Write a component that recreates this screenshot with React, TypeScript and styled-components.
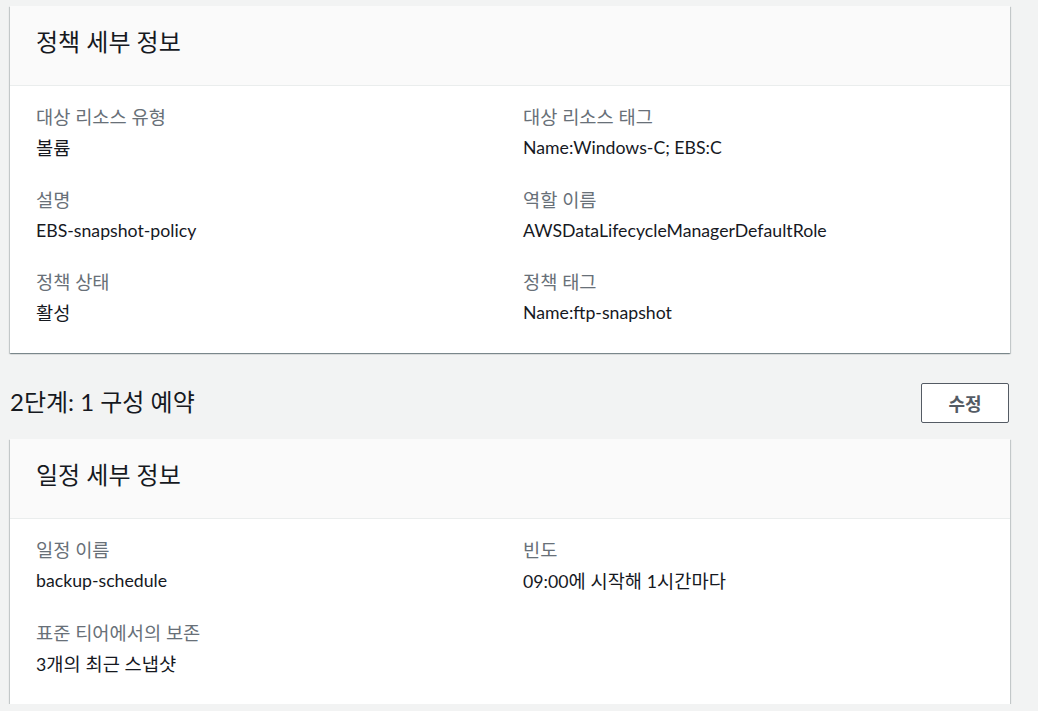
import React from "react";
import styled, { createGlobalStyle } from "styled-components";

const GlobalStyle = createGlobalStyle`
  html, body {
    margin: 0;
    padding: 0;
    background: #f2f3f3;
  }
  body {
    font-family: "Lato", "Noto Sans CJK KR", sans-serif;
    color: #16191f;
  }
`;

const Page = styled.div`
  padding: 6px 28px 0 10px;
  width: 1000px;
`;

const Card = styled.section`
  background: #ffffff;
  box-shadow: 0 1px 1px 0 rgba(0, 28, 36, 0.3), 1px 1px 1px 0 rgba(0, 28, 36, 0.15),
    -1px 1px 1px 0 rgba(0, 28, 36, 0.15);
`;

const CardHeader = styled.div`
  height: 80px;
  padding: 0 26px 8px;
  box-sizing: border-box;
  display: flex;
  align-items: center;
  background: #fafafa;
  border-bottom: 1px solid #eaeded;
`;

const CardTitle = styled.h2`
  margin: 0;
  font-size: 24px;
  font-weight: 400;
  line-height: 30px;
  color: #16191f;
`;

const CardBody = styled.dl`
  margin: 0;
  padding: 18px 26px 26px;
  display: grid;
  grid-template-columns: 1fr 1fr;
  column-gap: 26px;
  row-gap: 25px;
`;

const Field = styled.div`
  display: flex;
  flex-direction: column;
  gap: 5px;
`;

const Label = styled.dt`
  font-size: 18.7px;
  line-height: 26px;
  color: #687078;
`;

const Value = styled.dd`
  margin: 0;
  font-size: 17.7px;
  line-height: 26px;
  color: #16191f;
`;

// hangul runs sit a little larger than the latin text next to them
const Ko = styled.span`
  font-size: 1.056em;
`;

const StepRow = styled.div`
  display: flex;
  align-items: center;
  justify-content: space-between;
  margin: 30px 0 16px;
`;

const StepTitle = styled.h2`
  margin: 0 0 2px;
  font-size: 24px;
  font-weight: 400;
  line-height: 30px;
  color: #16191f;
`;

const Button = styled.button`
  width: 88px;
  height: 40px;
  margin-right: 1px;
  background: #ffffff;
  border: 1px solid #545b64;
  border-radius: 2px;
  font-family: inherit;
  font-size: 18px;
  font-weight: 700;
  color: #545b64;
  cursor: pointer;
`;

type Item = { label: string; value: string };

const policyItems: Item[] = [
  { label: "대상 리소스 유형", value: "볼륨" },
  { label: "대상 리소스 태그", value: "Name:Windows-C; EBS:C" },
  { label: "설명", value: "EBS-snapshot-policy" },
  { label: "역할 이름", value: "AWSDataLifecycleManagerDefaultRole" },
  { label: "정책 상태", value: "활성" },
  { label: "정책 태그", value: "Name:ftp-snapshot" },
];

const scheduleItems: Item[] = [
  { label: "일정 이름", value: "backup-schedule" },
  { label: "빈도", value: "09:00에 시작해 1시간마다" },
  { label: "표준 티어에서의 보존", value: "3개의 최근 스냅샷" },
];

const mixed = (text: string) =>
  text
    .split(/([\uAC00-\uD7A3][\uAC00-\uD7A3 ]*)/)
    .filter(Boolean)
    .map((part, i) =>
      /[\uAC00-\uD7A3]/.test(part) ? <Ko key={i}>{part}</Ko> : <React.Fragment key={i}>{part}</React.Fragment>
    );

const DetailCard: React.FC<{ title: string; items: Item[] }> = ({ title, items }) => (
  <Card>
    <CardHeader>
      <CardTitle>{title}</CardTitle>
    </CardHeader>
    <CardBody>
      {items.map((it) => (
        <Field key={it.label}>
          <Label>{it.label}</Label>
          <Value>{mixed(it.value)}</Value>
        </Field>
      ))}
    </CardBody>
  </Card>
);

const App: React.FC = () => {
  return (
    <>
      <GlobalStyle />
      <Page>
        <DetailCard title="정책 세부 정보" items={policyItems} />
        <StepRow>
          <StepTitle>2단계: 1 구성 예약</StepTitle>
          <Button type="button">수정</Button>
        </StepRow>
        <DetailCard title="일정 세부 정보" items={scheduleItems} />
      </Page>
    </>
  );
};

export default App;
